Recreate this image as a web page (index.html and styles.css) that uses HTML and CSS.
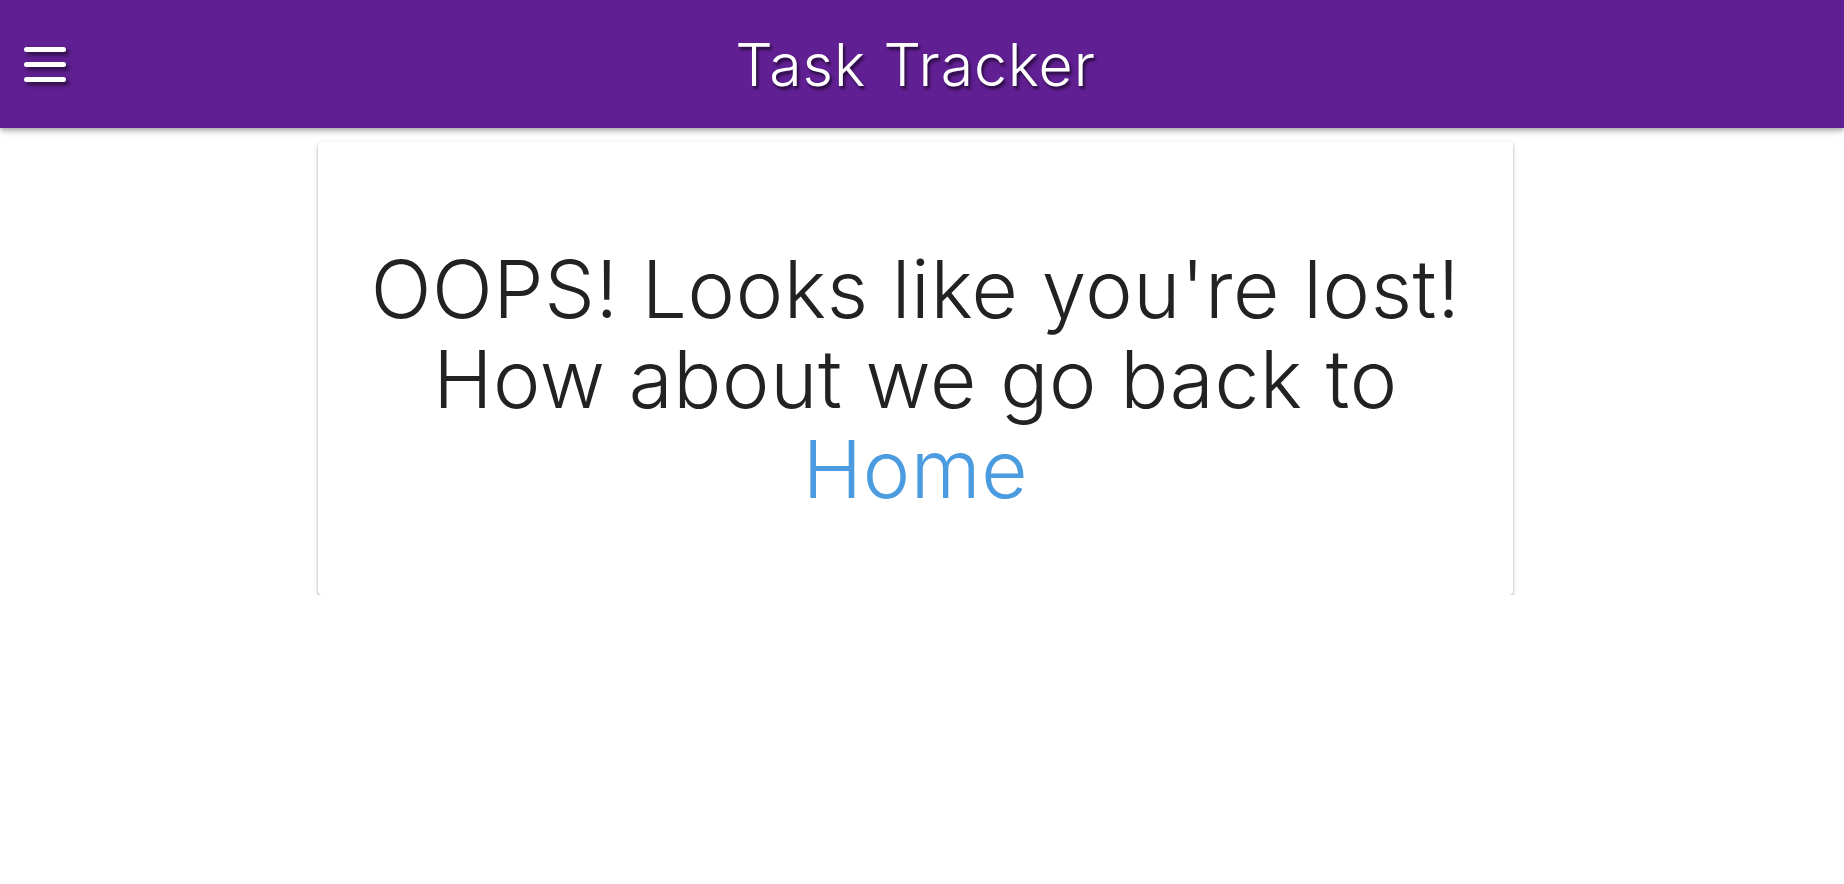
FILE: index.html
```html
<!DOCTYPE html>
<html lang="en">
<head>
<meta charset="utf-8">
<title>Task Tracker</title>
<link rel="stylesheet" href="styles.css">
</head>
<body>
<header class="app-bar">
  <div class="app-bar__left">
    <button class="menu-btn" aria-label="Menu">
      <svg width="42" height="35" viewBox="0 0 42 35" aria-hidden="true">
        <line x1="2.5" y1="2.5" x2="39.5" y2="2.5"/>
        <line x1="2.5" y1="17.5" x2="39.5" y2="17.5"/>
        <line x1="2.5" y1="32.5" x2="39.5" y2="32.5"/>
      </svg>
    </button>
  </div>
  <h1 class="app-bar__title">Task Tracker</h1>
  <div class="app-bar__right"></div>
</header>
<main class="page">
  <section class="card">
    <h2 class="card__message">OOPS! Looks like you're lost! How about we go back to <a href="#" class="card__link">Home</a></h2>
  </section>
</main>
</body>
</html>
```
FILE: styles.css
```css
html, body {
  margin: 0;
  padding: 0;
  background: #ffffff;
}

body {
  font-family: "Inter", "Lato", sans-serif;
  color: #222222;
}

.app-bar {
  height: 128px;
  background: #601f92;
  display: grid;
  grid-template-columns: 1fr auto 1fr;
  align-items: center;
  padding-right: 13px;
  box-shadow: 0 2px 4px -1px rgba(0,0,0,0.2), 0 4px 5px 0 rgba(0,0,0,0.14), 0 1px 10px 0 rgba(0,0,0,0.12);
  position: relative;
  z-index: 2;
}

.app-bar__left {
  display: flex;
  align-items: center;
  padding-left: 24px;
}

.menu-btn {
  background: none;
  border: 0;
  padding: 0;
  margin: 0;
  display: block;
  line-height: 0;
  cursor: pointer;
}

.menu-btn svg {
  display: block;
  filter: drop-shadow(3px 3px 2px rgba(0,0,0,0.6));
}

.menu-btn line {
  stroke: #ffffff;
  stroke-width: 5;
  stroke-linecap: round;
}

.app-bar__title {
  margin: 0;
  font-family: "Inter", "Lato", sans-serif;
  font-weight: 300;
  font-size: 59px;
  color: #ffffff;
  letter-spacing: 0.9px;
  text-shadow: 2px 3px 3px rgba(0,0,0,0.6);
  white-space: nowrap;
}

.page {
  padding: 14px 13px 0 0;
}

.card {
  width: 1195px;
  margin: 0 auto;
  box-sizing: border-box;
  background: #ffffff;
  border-radius: 4px;
  padding: 102px 40px 81px;
  box-shadow: 0 2px 3px 0 rgba(0,0,0,0.28), 0 1px 6px 0 rgba(0,0,0,0.1);
}

.card__message {
  margin: 0;
  text-align: center;
  font-family: "Inter", "Lato", sans-serif;
  font-weight: 300;
  font-size: 80px;
  line-height: 90px;
  letter-spacing: 0.65px;
  color: #222222;
}

.card__link {
  color: #4a9be0;
  text-decoration: none;
}
```
